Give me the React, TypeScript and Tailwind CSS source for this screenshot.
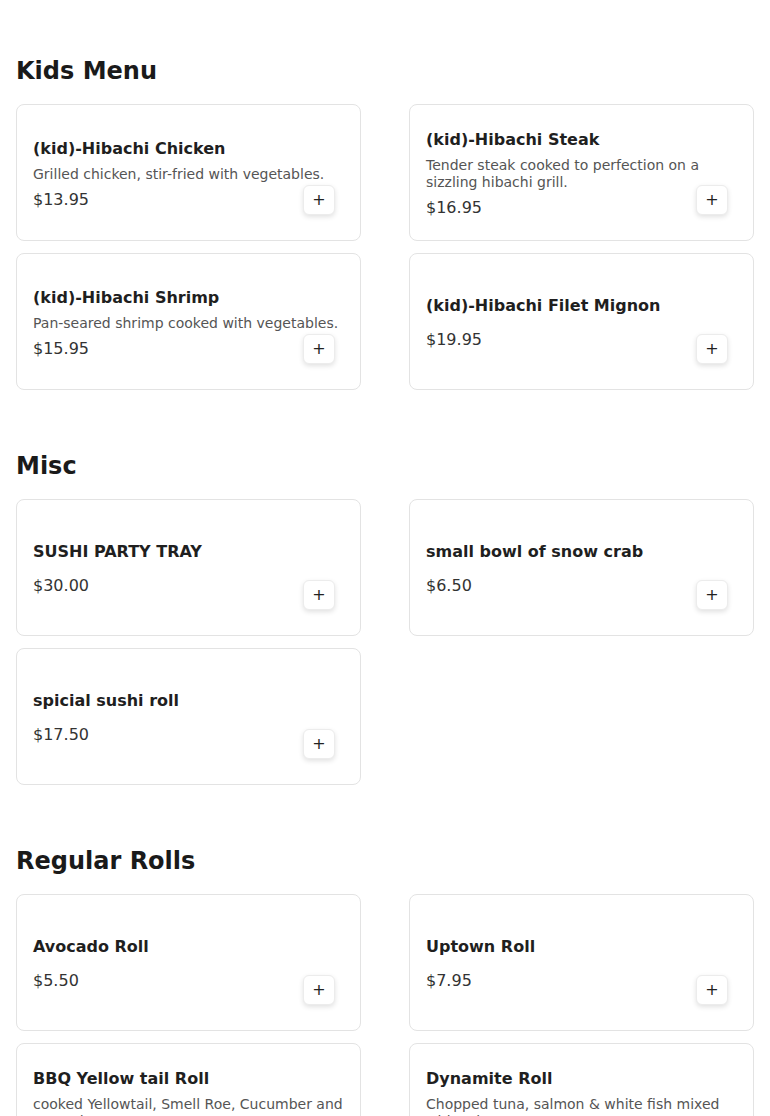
type Item = { name: string; desc?: string; price: string };

const sections: { title: string; items: Item[] }[] = [
  {
    title: "Kids Menu",
    items: [
      { name: "(kid)-Hibachi Chicken", desc: "Grilled chicken, stir-fried with vegetables.", price: "$13.95" },
      { name: "(kid)-Hibachi Steak", desc: "Tender steak cooked to perfection on a sizzling hibachi grill.", price: "$16.95" },
      { name: "(kid)-Hibachi Shrimp", desc: "Pan-seared shrimp cooked with vegetables.", price: "$15.95" },
      { name: "(kid)-Hibachi Filet Mignon", price: "$19.95" },
    ],
  },
  {
    title: "Misc",
    items: [
      { name: "SUSHI PARTY TRAY", price: "$30.00" },
      { name: "small bowl of snow crab", price: "$6.50" },
      { name: "spicial sushi roll", price: "$17.50" },
    ],
  },
  {
    title: "Regular Rolls",
    items: [
      { name: "Avocado Roll", price: "$5.50" },
      { name: "Uptown Roll", price: "$7.95" },
      { name: "BBQ Yellow tail Roll", desc: "cooked Yellowtail, Smell Roe, Cucumber and avocado", price: "$8.95" },
      { name: "Dynamite Roll", desc: "Chopped tuna, salmon & white fish mixed with spicy mayo", price: "$9.95" },
    ],
  },
];

function MenuCard({ item }: { item: Item }) {
  return (
    <div className="relative flex h-[137px] items-center rounded-lg border border-[#e3e3e3] bg-white px-4 pt-[2px]">
      <div className="flex w-full flex-col">
        <h3 className="text-[16px] font-bold leading-[19px] text-[#1f1f1f]">{item.name}</h3>
        {item.desc && (
          <p className="mt-2 text-[14px] leading-[17px] text-[#555555]">{item.desc}</p>
        )}
        <span className={`${item.desc ? "mt-[7px]" : "mt-[15px]"} text-[16px] leading-[19px] text-[#333333]`}>
          {item.price}
        </span>
      </div>
      <button className="absolute bottom-[25px] right-[25px] flex h-[30px] w-8 items-center justify-center rounded-md border border-[#ececec] bg-white text-[16px] leading-none text-[#222] shadow-[0_2px_5px_rgba(0,0,0,0.12)]">
        +
      </button>
    </div>
  );
}

export default function App() {
  return (
    <div className="min-h-screen bg-white px-4 pt-[55px] font-['DejaVu_Sans',sans-serif]">
      {sections.map((s, i) => (
        <section key={s.title} className={i > 0 ? "mt-[60px]" : ""}>
          <h2 className="mb-[17px] text-[24px] font-bold leading-8 text-[#1a1a1a]">{s.title}</h2>
          <div className="grid grid-cols-2 gap-x-12 gap-y-3">
            {s.items.map((it) => (
              <MenuCard key={it.name} item={it} />
            ))}
          </div>
        </section>
      ))}
    </div>
  );
}
